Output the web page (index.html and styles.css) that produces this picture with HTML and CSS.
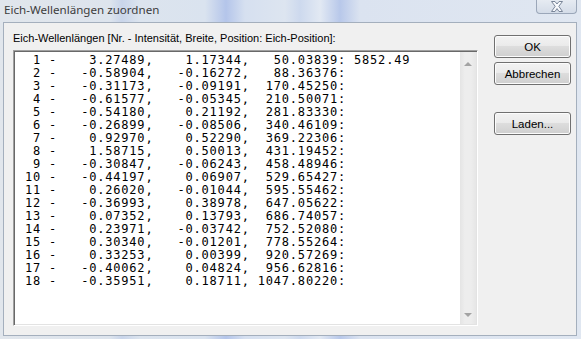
FILE: index.html
```html
<!DOCTYPE html>
<html lang="de">
<head>
    <meta charset="UTF-8" />
    <title>Eich-Wellenlängen zuordnen</title>
    <link rel="stylesheet" href="styles.css">
</head>
<body>
    <div class="window">
        <div class="titlebar">
            <span class="title">Eich-Wellenlängen zuordnen</span>
            <div class="close">
                <svg width="16" height="11" viewBox="0 0 16 11">
                    <path d="M2.5 0.5 H6 L8 3 L10 0.5 H13.5 L9.8 5.3 L13.5 10.5 H10 L8 7.6 L6 10.5 H2.5 L6.2 5.3 Z"
                        fill="#f7f9fc" stroke="#7a8699" stroke-width="1" stroke-linejoin="round" />
                </svg>
            </div>
        </div>

        <div class="client">
            <div class="main">
                <div class="caption">Eich-Wellenlängen [Nr. - Intensität, Breite, Position: Eich-Position]:</div>
                <div class="listbox">
<pre class="lines">  1 -    3.27489,    1.17344,   50.03839: 5852.49
  2 -   -0.58904,   -0.16272,   88.36376:
  3 -   -0.31173,   -0.09191,  170.45250:
  4 -   -0.61577,   -0.05345,  210.50071:
  5 -   -0.54180,    0.21192,  281.83330:
  6 -   -0.26899,   -0.08506,  340.46109:
  7 -    0.92970,    0.52290,  369.22306:
  8 -    1.58715,    0.50013,  431.19452:
  9 -   -0.30847,   -0.06243,  458.48946:
 10 -   -0.44197,    0.06907,  529.65427:
 11 -    0.26020,   -0.01044,  595.55462:
 12 -   -0.36993,    0.38978,  647.05622:
 13 -    0.07352,    0.13793,  686.74057:
 14 -    0.23971,   -0.03742,  752.52080:
 15 -    0.30340,   -0.01201,  778.55264:
 16 -    0.33253,    0.00399,  920.57269:
 17 -   -0.40062,    0.04824,  956.62816:
 18 -   -0.35951,    0.18711, 1047.80220:</pre>
                    <div class="scrollbar">
                        <span class="arrow up"></span>
                        <span class="arrow down"></span>
                    </div>
                </div>
            </div>

            <div class="buttons">
                <button class="btn">OK</button>
                <button class="btn">Abbrechen</button>
                <button class="btn load">Laden...</button>
            </div>
        </div>
    </div>
</body>
</html>
```

FILE: styles.css
```css
body {
    margin: 0;
    overflow: hidden;
    background: #dce4ef;
}

.window {
    width: 581px;
    height: 339px;
    display: flex;
    flex-direction: column;
    background: linear-gradient(90deg,
            #e1e6ec 0px, #dde4ed 110px, #c9d5ea 122px, #dce4ee 140px,
            #dae3ef 205px, #b4c5ea 226px, #d6e0f0 245px,
            #dde5f0 285px, #cdd9ee 300px, #e2e9f3 320px,
            #b8c8ea 340px, #dbe3f0 360px, #e0e7f1 581px);
}

.titlebar {
    height: 22px;
    display: flex;
    justify-content: space-between;
    align-items: flex-start;
    padding: 0 4px 0 4px;
}

.title {
    font-family: "Noto Sans", sans-serif;
    font-size: 11.6px;
    line-height: 14px;
    margin-top: 3px;
    color: #3d3d3d;
}

.close {
    width: 39px;
    height: 12px;
    border: 1px solid #9ba7b9;
    border-top: none;
    border-radius: 0 0 4px 4px;
    background: linear-gradient(#e6ebf2, #d4dce8);
    display: flex;
    justify-content: center;
    align-items: flex-start;
    padding-top: 1px;
}

.client {
    height: 314px;
    margin: 0 4px 0 3px;
    box-sizing: border-box;
    border: 1px solid #a4afbd;
    background-color: #f0f0f0;
    display: flex;
    padding: 9px 5px 0 9px;
    font-family: "Liberation Sans", sans-serif;
    font-size: 11px;
}

.main {
    display: flex;
    flex-direction: column;
}

.caption {
    height: 13px;
    line-height: 13px;
    margin-bottom: 5px;
    color: #000;
}

.listbox {
    width: 465px;
    height: 276px;
    box-sizing: border-box;
    display: flex;
    background-color: white;
    border-top: 1px solid #a0a0a0;
    border-left: 1px solid #a0a0a0;
    border-right: 1px solid #ffffff;
    border-bottom: 1px solid #ffffff;
    box-shadow: inset 1px 1px 0 #696969, inset -1px -1px 0 #e3e3e3;
    padding: 1px;
}

.lines {
    flex: 1;
    margin: 0;
    padding: 2px 0 0 2px;
    font-family: "DejaVu Sans Mono", monospace;
    font-size: 12px;
    letter-spacing: 0.8px;
    line-height: 13px;
    color: #000;
}

.scrollbar {
    width: 16px;
    display: flex;
    flex-direction: column;
    justify-content: space-between;
    align-items: center;
    background: linear-gradient(90deg, #e4e4e4, #ededed 30%, #ededed 70%, #e6e6e6);
    padding: 10px 0 7px 0;
}

.arrow {
    width: 0;
    height: 0;
    border-left: 4px solid transparent;
    border-right: 4px solid transparent;
}

.arrow.up {
    border-bottom: 4px solid #a3a3a3;
}

.arrow.down {
    border-top: 4px solid #a3a3a3;
}

.buttons {
    display: flex;
    flex-direction: column;
    gap: 4px;
    margin-left: 16px;
    padding-top: 3px;
}

.btn {
    width: 77px;
    height: 23px;
    box-sizing: border-box;
    border: 1px solid #707070;
    border-radius: 3px;
    background: linear-gradient(#f2f2f2 0%, #ebebeb 45%, #dddddd 50%, #cfcfcf 100%);
    box-shadow: inset 0 0 0 1px #fcfcfc;
    font-family: "Liberation Sans", sans-serif;
    font-size: 11.5px;
    color: #000;
    padding: 0;
}

.load {
    margin-top: 23px;
}
```
